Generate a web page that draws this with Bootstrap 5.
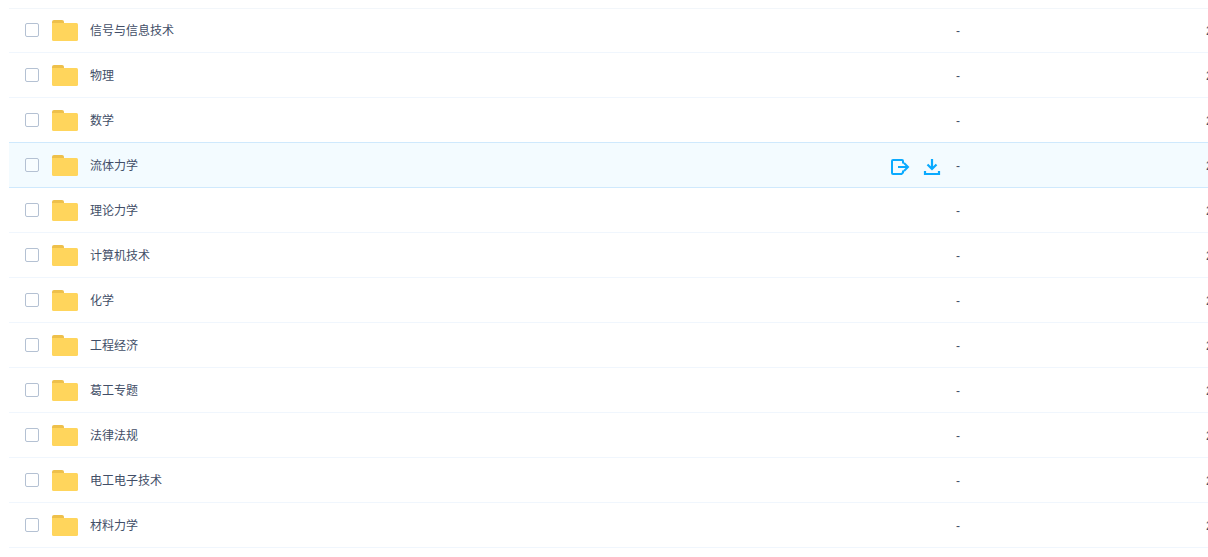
<!DOCTYPE html>
<html lang="zh-CN">
<head>
<meta charset="utf-8">
<meta name="viewport" content="width=device-width, initial-scale=1">
<title>文件列表</title>
<link href="https://cdn.jsdelivr.net/npm/bootstrap@5.3.0/dist/css/bootstrap.min.css" rel="stylesheet">
<style>
  body { font-family: "Liberation Sans", "Noto Sans CJK SC", sans-serif; font-size: 12px; line-height: 18px; color: #424e67; }
  .file-list { padding: 8px 0 8px 9px; }
  .file-table { width: calc(100% + 8px); table-layout: fixed; border-collapse: separate; border-spacing: 0; }
  .file-table td { height: 45px; padding: 14px 0 0; vertical-align: top; border-bottom: 1px solid #f0f6fd; }
  .file-table td:first-child { padding-top: 12px; }
  .file-table tr:first-child td { border-top: 1px solid #f2f6fa; padding-top: 13px; }
  .file-table tr:first-child td:first-child { padding-top: 11px; }
  .file-table tr.is-active td { background: #f3fbff; }
  .file-table tr.is-active td, .file-table tr:has(+ .is-active) td { border-bottom-color: #cfe9fd; }
  .col-size { width: 250px; }
  .col-date { width: 10px; }
  .name-box { height: 22px; padding: 0 15px 0 16px; }
  .file-check.form-check-input { width: 14px; height: 14px; margin: 0 13px 2px 0; border: 1px solid #b4c1d3; border-radius: 2px; background-color: #fff; }
  .is-active .file-check.form-check-input { background-color: #f8fdff; }
  .folder { width: 26px; height: 22px; margin-right: 12px; }
  .file-link { color: #424e67; }
  .tools { gap: 14px; padding-top: 2px; }
  .tool { width: 18px; height: 18px; line-height: 0; color: #09aaff; }
  .tool svg { overflow: visible; }
</style>
</head>
<body>
<svg class="d-none" aria-hidden="true">
  <symbol id="folder" viewBox="0 0 26 22">
    <path fill="#eec04b" d="M0 6V2Q0 0 2 0h8q2 0 2 2v4z"/>
    <path fill="#ffd55c" d="M0 3h24.500q1.500 0 1.500 1.500V19.500q0 1.500-1.500 1.500h-23Q0 21 0 19.500z"/>
  </symbol>
</svg>
<main class="file-list overflow-hidden">
  <table class="file-table">
    <colgroup><col><col class="col-size"><col class="col-date"></colgroup>
    <tbody id="rows"></tbody>
  </table>
</main>
<script src="https://cdn.jsdelivr.net/npm/bootstrap@5.3.0/dist/js/bootstrap.bundle.min.js"></script>
<script>
  const files = ["信号与信息技术", "物理", "数学", "流体力学", "理论力学", "计算机技术", "化学", "工程经济", "葛工专题", "法律法规", "电工电子技术", "材料力学"];
  const active = 3;
  const tools = `<div class="tools d-flex ms-auto">
    <button type="button" class="tool btn p-0 border-0" aria-label="分享"><svg width="18" height="18" viewBox="0 0 18 18" fill="none" stroke="currentColor" stroke-width="2"><path d="M12 5.500V3Q12 2 11 2H2Q1 2 1 3V15Q1 16 2 16H10.500L12 14.500V12.500M7 9H17M13 5 17 9 13 13"/></svg></button>
    <button type="button" class="tool btn p-0 border-0" aria-label="下载"><svg width="18" height="18" viewBox="0 0 18 18" fill="none" stroke="currentColor" stroke-width="2"><path d="M9 1V11M4.500 6.500 9 11 13.500 6.500M2 13V16H16V13" stroke-width="2.200"/></svg></button>
  </div>`;
  document.getElementById("rows").innerHTML = files.map((name, i) => `
    <tr class="${i === active ? "is-active" : ""}">
      <td><div class="name-box d-flex align-items-center">
        <input class="file-check form-check-input flex-shrink-0" type="checkbox" id="file-${i}" aria-labelledby="name-${i}">
        <svg class="folder flex-shrink-0" aria-hidden="true"><use href="#folder"/></svg>
        <a class="file-link text-decoration-none" id="name-${i}" href="#">${name}</a>
        ${i === active ? tools : ""}
      </div></td>
      <td>-</td>
      <td>2</td>
    </tr>`).join("");
</script>
</body>
</html>
